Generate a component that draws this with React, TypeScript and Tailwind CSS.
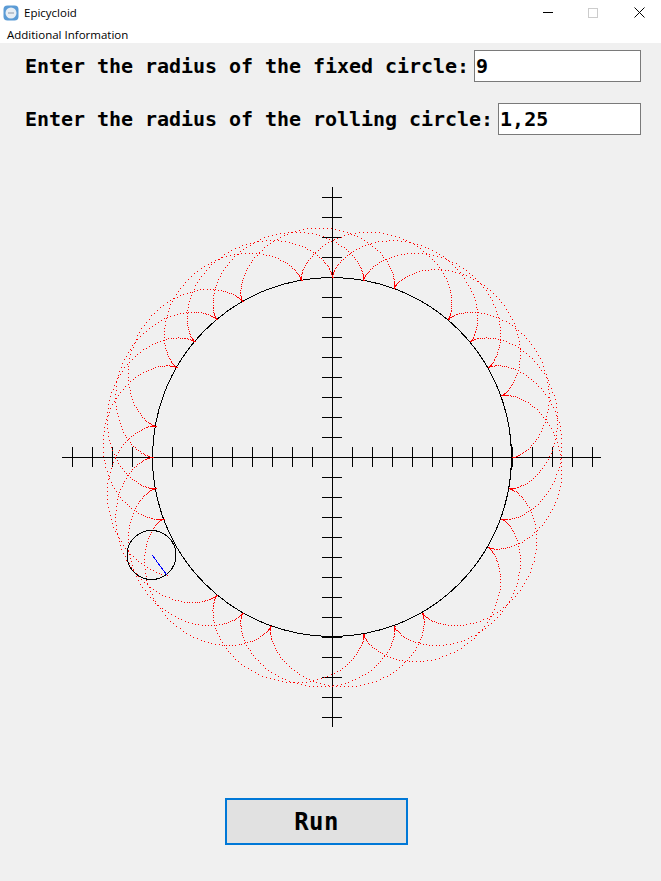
const CX = 332;
const CY = 457;
const SCALE = 20;
const R = 9;
const r = 1.25;
// where the animation stopped, in radians
const T_END = (1288.6 * Math.PI) / 180;
const STEP = 0.01;

function tracePoints() {
  const pts: { x: number; y: number; slow: boolean }[] = [];
  const k = (R + r) / r;
  for (let t = 0; t <= T_END; t += STEP) {
    const x = (R + r) * Math.cos(t) - r * Math.cos(k * t);
    const y = (R + r) * Math.sin(t) - r * Math.sin(k * t);
    // pen barely moves near a cusp, the dots pile up there
    const slow = Math.cos((k - 1) * t) > 0.995;
    pts.push({ x: Math.round(CX + x * SCALE), y: Math.round(CY - y * SCALE), slow });
  }
  return pts;
}

const ticks = Array.from({ length: 27 }, (_, i) => (i - 13) * 20);

function Plot() {
  const pts = tracePoints();
  const k = (R + r) / r;
  const hubX = Math.floor(CX + (R + r) * SCALE * Math.cos(T_END));
  const hubY = Math.floor(CY - (R + r) * SCALE * Math.sin(T_END));
  const penX = hubX - r * SCALE * Math.cos(k * T_END);
  const penY = hubY + r * SCALE * Math.sin(k * T_END);

  return (
    <svg width={661} height={540} viewBox="0 187 661 540" className="mt-[52px] block" shapeRendering="crispEdges">
      <line x1={62} y1={457.5} x2={601} y2={457.5} stroke="#000" />
      <line x1={332.5} y1={187} x2={332.5} y2={727} stroke="#000" />
      {ticks.map((d) => (
        <g key={d}>
          <line x1={CX + d + 0.5} y1={447} x2={CX + d + 0.5} y2={467} stroke="#000" />
          <line x1={322} y1={CY + d + 0.5} x2={342} y2={CY + d + 0.5} stroke="#000" />
        </g>
      ))}
      <circle cx={CX} cy={CY} r={179.5} fill="none" stroke="#000" />
      {pts.map((p, i) => (
        <rect key={i} x={p.x} y={p.y} width={p.slow ? 2 : 1} height={1} fill="#f00" />
      ))}
      <circle cx={hubX - 0.5} cy={hubY} r={24.5} fill="none" stroke="#000" />
      <line x1={hubX + 0.5} y1={hubY + 0.5} x2={penX} y2={penY} stroke="#00f" />
    </svg>
  );
}

export default function App() {
  return (
    <div className="h-[881px] w-[661px] overflow-hidden bg-[#f0f0f0] font-['Open_Sans',sans-serif]">
      <div className="flex h-[25px] items-center bg-white pl-[3px]">
        <svg width={16} height={16} viewBox="0 0 16 16" className="shrink-0">
          <rect x={0.5} y={0.5} width={15} height={15} rx={4} fill="#5b9bd5" />
          <circle cx={8} cy={8} r={5.5} fill="#e8eef4" />
          <rect x={5} y={7.5} width={6} height={1} fill="#8a98a8" />
        </svg>
        <span className="ml-[5px] text-[11.5px] text-black">Epicycloid</span>
        <div className="ml-auto flex items-center">
          <svg width={10} height={10} viewBox="0 0 10 10" className="mr-[35px]" shapeRendering="crispEdges">
            <rect x={0} y={4} width={10} height={1} fill="#000" />
          </svg>
          <svg width={10} height={10} viewBox="0 0 10 10" className="mr-[36px]" shapeRendering="crispEdges">
            <rect x={0.5} y={0.5} width={9} height={9} fill="none" stroke="#cccccc" />
          </svg>
          <svg width={11} height={11} viewBox="0 0 11 11" className="mr-[16px]">
            <path d="M0.5 0.5L10.5 10.5M10.5 0.5L0.5 10.5" fill="none" stroke="#000" />
          </svg>
        </div>
      </div>
      <div className="flex h-[18px] items-center bg-white pt-[2px] pl-[7px] text-[11.5px] text-black">
        Additional Information
      </div>

      <div className="mt-[7px] flex h-[32px] items-center pr-[20px] pl-[25px]">
        <label className="font-['DejaVu_Sans_Mono',monospace] text-[20px] font-bold tracking-[-0.04px] whitespace-pre text-black">
          Enter the radius of the fixed circle:
        </label>
        <input
          readOnly
          value="9"
          className="ml-[5px] h-[32px] min-w-0 flex-1 border border-[#7a7a7a] bg-white pl-[1px] font-['DejaVu_Sans_Mono',monospace] text-[20px] font-bold text-black outline-none"
        />
      </div>
      <div className="mt-[21px] flex h-[32px] items-center pr-[20px] pl-[25px]">
        <label className="font-['DejaVu_Sans_Mono',monospace] text-[20px] font-bold tracking-[-0.04px] whitespace-pre text-black">
          Enter the radius of the rolling circle:
        </label>
        <input
          readOnly
          value="1,25"
          className="ml-[5px] h-[32px] min-w-0 flex-1 border border-[#7a7a7a] bg-white pl-[1px] font-['DejaVu_Sans_Mono',monospace] text-[20px] font-bold text-black outline-none"
        />
      </div>

      <Plot />

      <button className="mt-[71px] ml-[225px] block h-[47px] w-[183px] border-2 border-[#0078d7] bg-[#e1e1e1] font-['DejaVu_Sans_Mono',monospace] text-2xl font-bold tracking-[0.4px] text-black">
        Run
      </button>
    </div>
  );
}
